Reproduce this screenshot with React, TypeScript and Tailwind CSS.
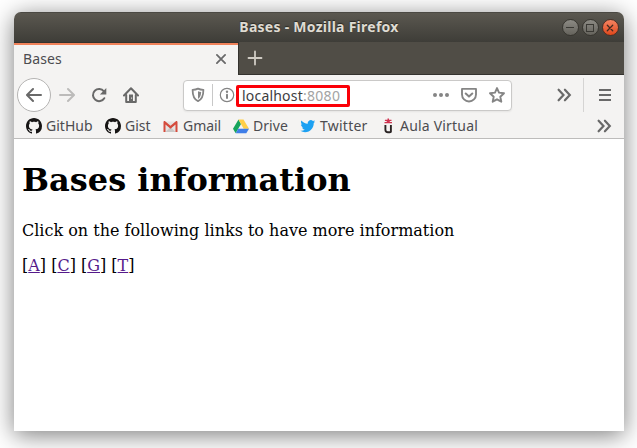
import React from "react";

const stroke = {
  fill: "none",
  stroke: "currentColor",
  strokeWidth: 2,
  strokeLinecap: "round" as const,
  strokeLinejoin: "round" as const,
};

function Icon({ children, className = "" }: { children: React.ReactNode; className?: string }) {
  return (
    <svg viewBox="0 0 16 16" className={`block h-4 w-4 shrink-0 ${className}`}>
      {children}
    </svg>
  );
}

function Chevrons() {
  return (
    <Icon>
      <path {...stroke} strokeWidth={2.2} strokeLinejoin="miter" d="M2.600 2.700L7.500 8l-4.900 5.300M8.900 2.700L13.800 8l-4.900 5.300" />
    </Icon>
  );
}

function GitHubMark() {
  return (
    <Icon className="text-[#171515]">
      <path
        fill="currentColor"
        fillRule="evenodd"
        d="M8 0C3.58 0 0 3.58 0 8c0 3.54 2.29 6.53 5.47 7.59.4.07.55-.17.55-.38 0-.19-.01-.82-.01-1.49-2.01.37-2.53-.49-2.69-.94-.09-.23-.48-.94-.82-1.13-.28-.15-.68-.52-.01-.53.63-.01 1.08.58 1.23.82.72 1.21 1.87.87 2.33.66.07-.52.28-.87.51-1.07-1.78-.2-3.64-.89-3.64-3.95 0-.87.31-1.59.82-2.15-.08-.2-.36-1.02.08-2.12 0 0 .67-.21 2.2.82.64-.18 1.32-.27 2-.27s1.36.09 2 .27c1.53-1.04 2.2-.82 2.2-.82.44 1.1.16 1.92.08 2.12.51.56.82 1.27.82 2.15 0 3.07-1.87 3.75-3.65 3.95.29.25.54.73.54 1.48 0 1.07-.01 1.93-.01 2.2 0 .21.15.46.55.38A8.01 8.01 0 0 0 16 8c0-4.42-3.58-8-8-8z"
      />
    </Icon>
  );
}

function GmailMark() {
  return (
    <Icon>
      <path fill="#e5e3e2" d="M1 3.500h13v10.500H1z" />
      <path fill="#c9c7c6" d="M2.500 14l5-5 5 5z" />
      <path fill="#d54b3d" d="M.5 4c0-.8.600-1.100 1.300-1.100l5.700 4.900 5.700-4.900c.8 0 1.300.4 1.300 1.100v10h-2V6.500l-5 4.300-5-4.300V14h-2z" />
    </Icon>
  );
}

function DriveMark() {
  return (
    <Icon>
      <path fill="#16a45c" d="M5.500 1.500L0 10.800l2.700 4.500L8 6.100z" />
      <path fill="#ffcf48" d="M5.500 1.500h5l5.500 9.300h-5.300z" />
      <path fill="#3f7ee8" d="M5.300 10.800H16l-2.700 4.500H2.700z" />
    </Icon>
  );
}

function TwitterMark() {
  return (
    <Icon>
      <path
        fill="#1da1f2"
        d="M5.030 14.200c5.600 0 8.700-4.700 8.700-8.700v-.4c.6-.4 1.100-1 1.500-1.600-.5.200-1.100.4-1.700.5.600-.4 1.100-1 1.300-1.700-.6.400-1.200.6-1.900.7a3.060 3.060 0 0 0-5.200 2.800C5.100 5.700 2.900 4.500 1.400 2.600c-.8 1.400-.4 3.200.9 4.100-.5 0-1-.2-1.400-.4 0 1.500 1.100 2.800 2.500 3.100-.5.100-.9.100-1.400.1.400 1.200 1.500 2.100 2.900 2.100-1.300 1-2.900 1.400-4.500 1.200 1.400.9 3 1.400 4.630 1.400"
      />
    </Icon>
  );
}

function UniversityMark() {
  return (
    <Icon>
      <path fill="#cf3350" d="M7.500.5H9v1.300h2.500V3H9.800v1h2.200v1.300H4.500V4h2.200V3H4.900V1.800h2.600z" />
      <path {...stroke} stroke="#2b2424" strokeWidth={1.900} strokeLinecap="butt" d="M5.400 7v4.800c0 1.700.9 2.500 2.600 2.500.900 0 2-.1 2.900-.5V7" />
    </Icon>
  );
}

function Bookmark({ icon, label, className }: { icon: React.ReactNode; label: string; className: string }) {
  return (
    <a className={`flex shrink-0 items-center gap-1 whitespace-nowrap ${className}`}>
      {icon}
      <span>{label}</span>
    </a>
  );
}

function TitleBar() {
  return (
    <header className="grid h-[30px] shrink-0 grid-cols-[1fr_auto_1fr] items-center border-t border-[#4b4943] bg-linear-to-b from-[#5b5850] to-[#3e3d38]">
      <span />
      <h1 className="-mt-px text-[14px] font-bold leading-5 tracking-[0.26px] text-[#dfdbd2] [text-shadow:0_-1px_1px_#282723]">
        Bases - Mozilla Firefox
      </h1>
      <div className="flex justify-end gap-[3px] pr-[5.500px]">
        <button className="flex h-[17px] w-[17px] items-center justify-center rounded-full border border-[#37352f] bg-linear-to-b from-[#8c8a84] to-[#65635c]">
          <span className="h-px w-2 bg-[#3a3934]" />
        </button>
        <button className="flex h-[17px] w-[17px] items-center justify-center rounded-full border border-[#37352f] bg-linear-to-b from-[#8c8a84] to-[#65635c]">
          <span className="h-2 w-2 border border-[#3a3934]" />
        </button>
        <button className="flex h-[17px] w-[17px] items-center justify-center rounded-full border border-[#4b3027] bg-linear-to-b from-[#f58360] to-[#df4718]">
          <svg viewBox="0 0 8 8" className="h-2 w-2 text-[#422a20]">
            <path {...stroke} strokeWidth={1.300} d="M1.300 1.300l5.400 5.400M6.700 1.300L1.300 6.700" />
          </svg>
        </button>
      </div>
    </header>
  );
}

function TabStrip() {
  return (
    <div className="flex h-[33px] shrink-0 bg-[#504d46]">
      <div className="flex w-[224px] flex-col border-t border-[#34322e] bg-[#f4f3f2]">
        <span className="h-0.5 shrink-0 bg-[#f0825a]" />
        <div className="flex h-[28px] items-center justify-between pl-[9px] pr-[9px]">
          <span className="tracking-[0.1px] text-[#4c4c50]">Bases</span>
          <Icon className="text-[#69696a]">
            <path {...stroke} strokeWidth={1.800} d="M3.900 3.900l8.200 8.200M12.100 3.900l-8.200 8.200" />
          </Icon>
        </div>
      </div>
      <div className="flex flex-1 items-center border-b border-l border-[#34322e] pl-2 text-[#d0ccc4]">
        <Icon>
          <path {...stroke} strokeWidth={1.800} d="M8 1.500v13M1.500 8h13" />
        </Icon>
      </div>
    </div>
  );
}

function AddressBar() {
  return (
    <div className="ml-[44px] flex h-[31px] w-[329px] shrink-0 items-center rounded-[4px] border border-[#cac9c8] bg-white pl-1.5 pr-1.5 text-[#858585] shadow-[0_1px_2px_#00000010]">
      <Icon>
        <path {...stroke} strokeWidth={1.800} d="M8 1.600c1.700.9 3.600 1.200 5.400 1.200 0 5.700-1.400 9.700-5.400 11.400-4-1.700-5.400-5.700-5.400-11.400 1.800 0 3.700-.3 5.400-1.200z" />
        <path fill="currentColor" d="M8 4.200c1 .5 2 .8 3.200.9-.2 3.300-1 5.500-3.200 7z" />
      </Icon>
      <span className="ml-[6px] h-[22px] w-px bg-[#c8c8c8]" />
      <Icon className="ml-[6px]">
        <circle {...stroke} strokeWidth={1.200} cx="8" cy="8" r="6.700" />
        <path {...stroke} d="M8 7.700v3.200" />
        <circle cx="8" cy="4.700" r="1.200" fill="currentColor" />
      </Icon>
      <div className="mt-px ml-px flex h-[22px] w-[114px] shrink-0 items-center whitespace-nowrap rounded-[2px] border-[3px] border-[#fb0007] pl-[3px] text-[#3c3c3e]">
        <span className="tracking-[0.2px]">localhost</span>
        <span className="tracking-[0.3px] text-[#a3a3a3]">:8080</span>
      </div>
      <div className="ml-auto flex gap-3">
        <Icon>
          <circle cx="2" cy="8" r="2" fill="currentColor" />
          <circle cx="8" cy="8" r="2" fill="currentColor" />
          <circle cx="14" cy="8" r="2" fill="currentColor" />
        </Icon>
        <Icon>
          <path {...stroke} strokeWidth={1.900} d="M1 1.900h14v5.600a7 7 0 0 1-14 0z" />
          <path {...stroke} d="M4.700 6.500L8 9.600l3.300-3.100" />
        </Icon>
        <Icon>
          <path {...stroke} strokeWidth={1.900} d="M8 1.100l2 4.500 5 .6-3.700 3.500 1 5L8 12.300l-4.300 2.400 1-5L1 6.200l5-.6z" />
        </Icon>
      </div>
    </div>
  );
}

function NavBar() {
  return (
    <nav className="flex h-10 shrink-0 items-center pl-[3px] text-[#696969]">
      <button className="flex h-[34px] w-[34px] shrink-0 items-center justify-center rounded-full border border-[#b5b4b3] bg-white">
        <Icon>
          <path {...stroke} d="M15 8H1.200M7 2L1 8l6 6" />
        </Icon>
      </button>
      <Icon className="ml-2 text-[#bcbbba]">
        <path {...stroke} d="M1 8h13.800M9 2l6 6-6 6" />
      </Icon>
      <Icon className="ml-4">
        <path {...stroke} d="M13.300 11.200A6.100 6.100 0 1 1 12.900 4.300" />
        <path fill="currentColor" d="M15.300 1v6.400H8.900z" />
      </Icon>
      <Icon className="ml-4">
        <path {...stroke} d="M1 8.500L8 1.200l7 7.300" />
        <path {...stroke} d="M3.200 8v7h9.600V8" />
        <path fill="currentColor" fillRule="evenodd" d="M6 7.500h4V15H6zm2.200 3v1.300h.9v-1.300z" />
      </Icon>
      <AddressBar />
      <div className="ml-auto flex h-[34px] shrink-0 items-center pr-[11px]">
        <Chevrons />
        <span className="ml-[11px] h-[34px] w-px bg-[#d5d4d3]" />
        <Icon className="ml-[13px]">
          <path {...stroke} strokeLinecap="butt" d="M2 3h12M2 8h12M2 13h12" />
        </Icon>
      </div>
    </nav>
  );
}

function BookmarksBar() {
  return (
    <div className="flex h-[24px] shrink-0 items-center border-b border-[#bdbcbb] pb-0.5 pl-3 pr-3 text-[#4c4c50]">
      <Bookmark icon={<GitHubMark />} label="GitHub" className="w-[79px] tracking-[0.03px]" />
      <Bookmark icon={<GitHubMark />} label="Gist" className="w-[58px] tracking-[0px]" />
      <Bookmark icon={<GmailMark />} label="Gmail" className="w-[70px] tracking-[-0.05px]" />
      <Bookmark icon={<DriveMark />} label="Drive" className="w-[67px] tracking-[0.05px]" />
      <Bookmark icon={<TwitterMark />} label="Twitter" className="w-[80px] tracking-[0.25px]" />
      <Bookmark icon={<UniversityMark />} label="Aula Virtual" className="tracking-[0.2px]" />
      <span className="ml-auto text-[#696969]">
        <Chevrons />
      </span>
    </div>
  );
}

export default function App() {
  return (
    <div className="h-[448px] w-[637px] overflow-hidden bg-white pl-[14px] pt-3 font-['Noto_Sans',sans-serif] text-[14px] leading-5">
      <div className="flex h-[419px] w-[610px] flex-col overflow-hidden rounded-t-[7px] bg-[#f4f3f2] shadow-[0_4px_24px_rgba(0,0,0,0.52)]">
        <TitleBar />
        <TabStrip />
        <NavBar />
        <BookmarksBar />
        <main className="flex-1 bg-white px-2 pt-[22px] font-['DejaVu_Serif',serif] text-base text-black">
          <h2 className="text-[32px] font-bold leading-[38px]">Bases information</h2>
          <p className="mt-[22px] leading-[19px]">Click on the following links to have more information</p>
          <p className="mt-4 leading-[19px]">
            [<a className="text-[#551a8b] underline">A</a>] [<a className="text-[#551a8b] underline">C</a>] [
            <a className="text-[#551a8b] underline">G</a>] [<a className="text-[#551a8b] underline">T</a>]
          </p>
        </main>
      </div>
    </div>
  );
}
